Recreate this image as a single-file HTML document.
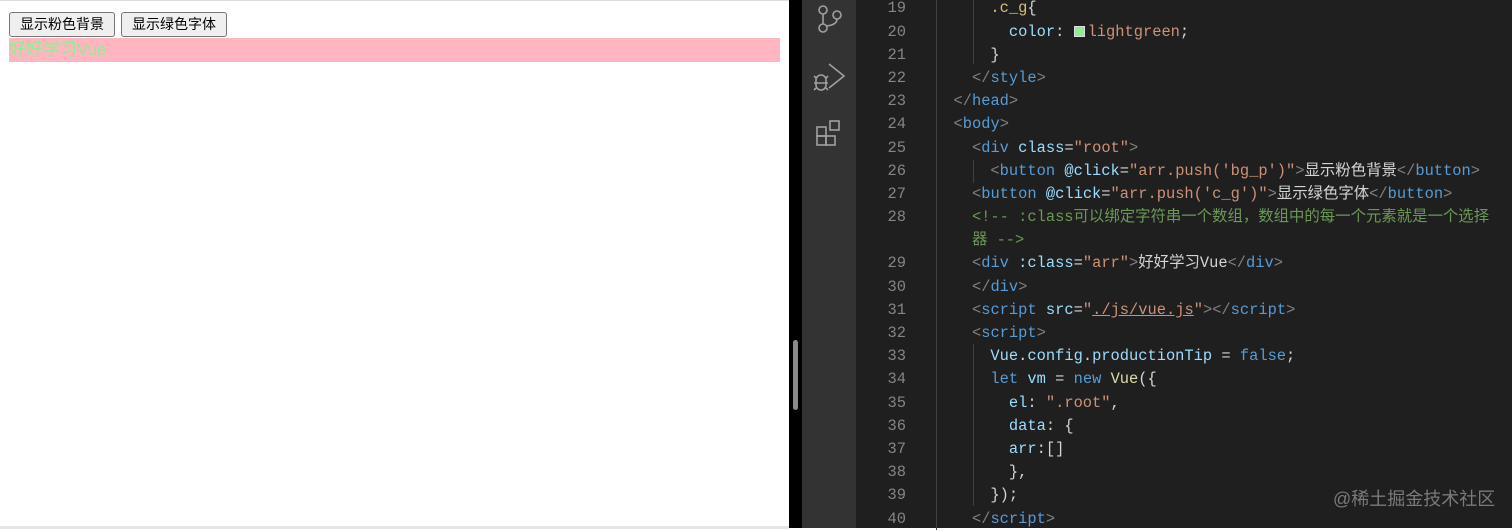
<!DOCTYPE html>
<html><head><meta charset="utf-8"><style>
*{margin:0;padding:0;box-sizing:border-box}
body{width:1512px;height:528px;overflow:hidden;position:relative;background:#fff;font-family:"Liberation Sans","Noto Sans CJK SC",sans-serif}
#left{position:absolute;left:0;top:0;width:789px;height:528px;background:#fff;border-top:1px solid #ddd}
.btn{position:absolute;top:11px;height:25px;border:1px solid #767676;border-radius:3px;background:#efefef;font-size:14px;line-height:23px;text-align:center;color:#000}
#pink{position:absolute;left:9px;top:37px;width:771px;height:24px;background:#ffb6c1;color:lightgreen;font-size:17px;line-height:24px}
#bot{position:absolute;left:0;top:525px;width:789px;height:3px;background:#e5e5e5}
#div{position:absolute;left:789px;top:0;width:13px;height:528px;background:#000}
#thumb{position:absolute;left:793px;top:340px;width:5px;height:70px;border-radius:3px;background:#8a8a8a}
#act{position:absolute;left:802px;top:0;width:54px;height:528px;background:#333}
#ed{position:absolute;left:856px;top:0;width:656px;height:528px;background:#1f1f1f}
#wrap{position:absolute;left:0;top:2px;width:1512px;height:528px}
.ln{position:absolute;left:856px;width:50px;text-align:right;color:#858585;font-family:"Liberation Mono",monospace;font-size:15.4px;line-height:23.18px;height:23.18px}
.cd{position:absolute;left:935px;white-space:pre;color:#d4d4d4;font-family:"Liberation Mono","Noto Sans CJK SC",monospace;font-size:15.4px;line-height:23.18px;height:23.18px}
.g{position:absolute;width:1px;background:#404040}
.p{color:#808080}.t{color:#569cd6}.a{color:#9cdcfe}.s{color:#ce9178}.c{color:#6a9955}.y{color:#d7ba7d}.k{color:#569cd6}.f{color:#dcdcaa}
#wm{position:absolute;left:1333px;top:485px;font-size:18px;color:#7a7a7a;font-family:"Liberation Sans","Noto Sans CJK SC",sans-serif}
</style></head><body>
<div id="left">
<div class="btn" style="left:9px;width:106px">显示粉色背景</div>
<div class="btn" style="left:121px;width:106px">显示绿色字体</div>
<div id="pink">好好学习Vue</div>
<div id="bot"></div>
</div>
<div id="div"></div><div id="thumb"></div>
<div id="act">
<svg width="54" height="160" style="position:absolute;left:0;top:0" fill="none" stroke="#a0a0a0" stroke-width="1.6">
<circle cx="21" cy="10" r="4"/><circle cx="21" cy="28" r="4"/><circle cx="35" cy="15" r="4"/>
<path d="M21 14V24M35 19Q35 25 24 26"/>
<path d="M27 64L42 76L27 88M14 80a5 5 0 0 1 10 0v5a5 5 0 0 1-10 0zM12 83h14M14 78l-2-2M24 78l2-2M14 88l-2 2M24 88l2 2"/>
<rect x="15" y="127" width="9" height="9"/><rect x="24" y="136" width="9" height="9"/><rect x="15" y="136" width="9" height="9"/><rect x="28" y="121" width="9" height="9"/>
</svg>
</div>
<div id="ed"></div>
<div id="wrap">
<div class="g" style="left:936px;top:-2px;height:530px"></div>
<div class="g" style="left:973px;top:-2px;height:64px"></div>
<div class="g" style="left:973px;top:158px;height:23px"></div>
<div class="g" style="left:973px;top:342px;height:162px"></div>

<div class="ln" style="top:-4.6px">19</div><div class="cd" style="top:-4.6px">      <span class="y">.c_g</span>{</div>
<div class="ln" style="top:18.6px">20</div><div class="cd" style="top:18.6px">        <span class="a">color</span>: <span style="display:inline-block;width:11px;height:11px;background:lightgreen;border:1px solid #ddd;vertical-align:-1px;margin-right:3px"></span><span class="s">lightgreen</span>;</div>
<div class="ln" style="top:41.8px">21</div><div class="cd" style="top:41.8px">      }</div>
<div class="ln" style="top:64.9px">22</div><div class="cd" style="top:64.9px">    <span class="p">&lt;/</span><span class="t">style</span><span class="p">&gt;</span></div>
<div class="ln" style="top:88.1px">23</div><div class="cd" style="top:88.1px">  <span class="p">&lt;/</span><span class="t">head</span><span class="p">&gt;</span></div>
<div class="ln" style="top:111.3px">24</div><div class="cd" style="top:111.3px">  <span class="p">&lt;</span><span class="t">body</span><span class="p">&gt;</span></div>
<div class="ln" style="top:134.5px">25</div><div class="cd" style="top:134.5px">    <span class="p">&lt;</span><span class="t">div</span> <span class="a">class</span>=<span class="s">"root"</span><span class="p">&gt;</span></div>
<div class="ln" style="top:157.7px">26</div><div class="cd" style="top:157.7px">      <span class="p">&lt;</span><span class="t">button</span> <span class="a">@click</span>=<span class="s">"arr.push('bg_p')"</span><span class="p">&gt;</span>显示粉色背景<span class="p">&lt;/</span><span class="t">button</span><span class="p">&gt;</span></div>
<div class="ln" style="top:180.9px">27</div><div class="cd" style="top:180.9px">    <span class="p">&lt;</span><span class="t">button</span> <span class="a">@click</span>=<span class="s">"arr.push('c_g')"</span><span class="p">&gt;</span>显示绿色字体<span class="p">&lt;/</span><span class="t">button</span><span class="p">&gt;</span></div>
<div class="ln" style="top:204.1px">28</div><div class="cd c" style="top:204.1px">    &lt;!-- :class可以绑定字符串一个数组，数组中的每一个元素就是一个选择</div>
<div class="cd c" style="top:227.2px">    器 --&gt;</div>
<div class="ln" style="top:250.4px">29</div><div class="cd" style="top:250.4px">    <span class="p">&lt;</span><span class="t">div</span> <span class="a">:class</span>=<span class="s">"arr"</span><span class="p">&gt;</span>好好学习Vue<span class="p">&lt;/</span><span class="t">div</span><span class="p">&gt;</span></div>
<div class="ln" style="top:273.6px">30</div><div class="cd" style="top:273.6px">    <span class="p">&lt;/</span><span class="t">div</span><span class="p">&gt;</span></div>
<div class="ln" style="top:296.8px">31</div><div class="cd" style="top:296.8px">    <span class="p">&lt;</span><span class="t">script</span> <span class="a">src</span>=<span class="s">"<span style="text-decoration:underline">./js/vue.js</span>"</span><span class="p">&gt;&lt;/</span><span class="t">script</span><span class="p">&gt;</span></div>
<div class="ln" style="top:320px">32</div><div class="cd" style="top:320px">    <span class="p">&lt;</span><span class="t">script</span><span class="p">&gt;</span></div>
<div class="ln" style="top:343.2px">33</div><div class="cd" style="top:343.2px">      <span class="a">Vue</span>.<span class="a">config</span>.<span class="a">productionTip</span> = <span class="k">false</span>;</div>
<div class="ln" style="top:366.4px">34</div><div class="cd" style="top:366.4px">      <span class="k">let</span> <span class="a">vm</span> = <span class="k">new</span> <span class="f">Vue</span>({</div>
<div class="ln" style="top:389.5px">35</div><div class="cd" style="top:389.5px">        <span class="a">el</span>: <span class="s">".root"</span>,</div>
<div class="ln" style="top:412.7px">36</div><div class="cd" style="top:412.7px">        <span class="a">data</span>: {</div>
<div class="ln" style="top:435.9px">37</div><div class="cd" style="top:435.9px">        <span class="a">arr</span>:[]</div>
<div class="ln" style="top:459.1px">38</div><div class="cd" style="top:459.1px">        },</div>
<div class="ln" style="top:482.3px">39</div><div class="cd" style="top:482.3px">      });</div>
<div class="ln" style="top:505.5px">40</div><div class="cd" style="top:505.5px">    <span class="p">&lt;/</span><span class="t">script</span><span class="p">&gt;</span></div>
</div>
<div id="wm">@稀土掘金技术社区</div>
</body></html>
